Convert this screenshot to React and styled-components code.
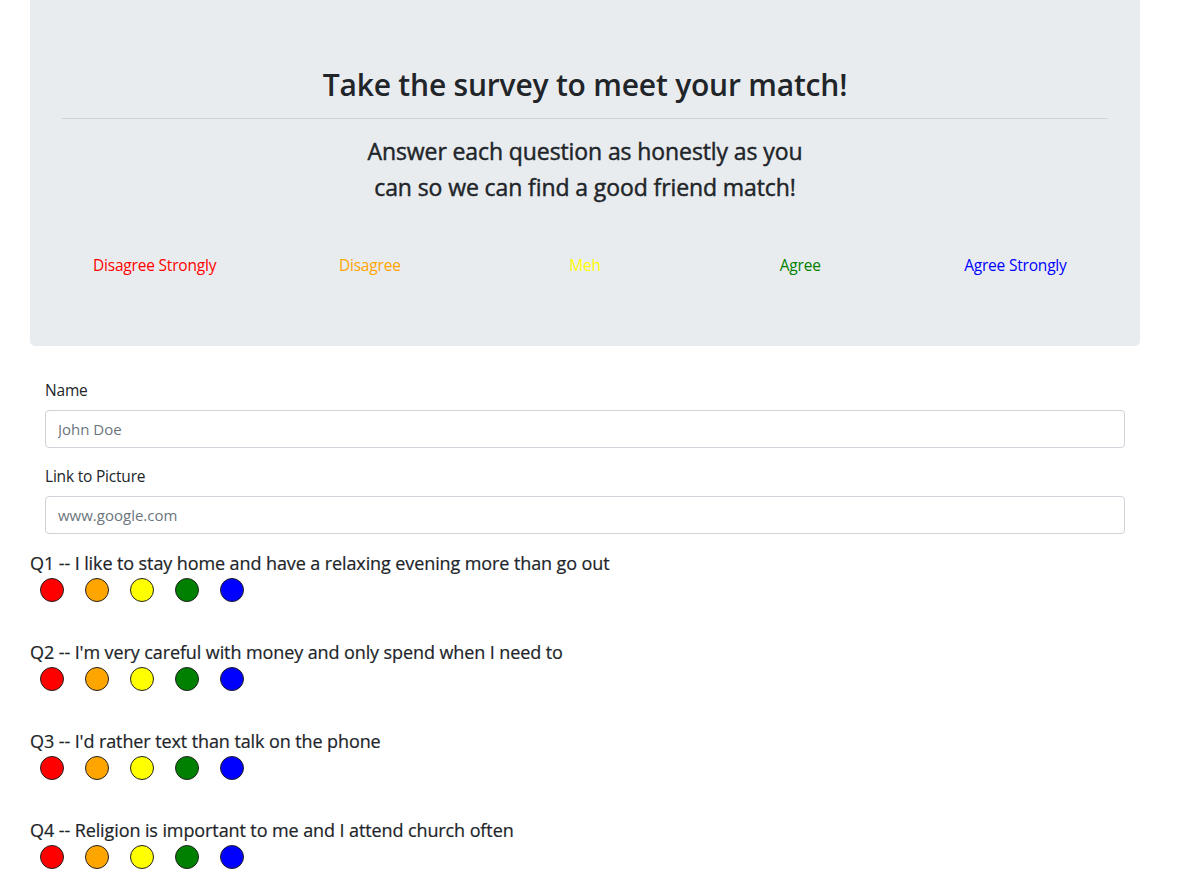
import React from "react";
import styled, { createGlobalStyle } from "styled-components";

const Global = createGlobalStyle`
  * { box-sizing: border-box; }
  body {
    margin: 0;
    background: #fff;
    color: #212529;
    font-family: "Open Sans", "Noto Sans", sans-serif;
    font-size: 16px;
    line-height: 1.5;
  }
`;

const Container = styled.div`
  width: 1110px;
  margin-left: 30px;
`;

const Jumbotron = styled.section`
  background: #e9ecef;
  border-radius: 0 0 5px 5px;
  padding: 66px 32px 69px;
  margin-bottom: 32px;
  text-align: center;
`;

const Title = styled.h1`
  margin: 0;
  font-size: 30px;
  font-weight: 600;
  line-height: 38px;
  letter-spacing: -0.2px;
`;

const Rule = styled.hr`
  border: 0;
  border-top: 1px solid rgba(0, 0, 0, 0.1);
  margin: 14px 0 14px;
`;

const Subtitle = styled.h4`
  margin: 0;
  font-size: 23px;
  font-weight: 400;
  line-height: 36px;
  letter-spacing: -0.1px;
  -webkit-text-stroke: 0.45px #212529;
`;

const Scale = styled.div`
  display: grid;
  grid-template-columns: repeat(5, 1fr);
  margin: 48px -15px 0;
`;

const ScaleLabel = styled.span`
  color: ${(p) => p.$color};
  font-size: 15.5px;
  line-height: 24px;
  letter-spacing: -0.2px;
`;

const Form = styled.form`
  padding: 0 15px 1px;
`;

const Group = styled.div`
  margin-bottom: 16px;
`;

const Label = styled.label`
  display: block;
  margin-bottom: 8px;
  font-size: 15.5px;
  line-height: 24px;
  letter-spacing: -0.2px;
`;

const Input = styled.input`
  display: block;
  width: 100%;
  height: 38px;
  padding: 6px 12px;
  font-family: inherit;
  font-size: 15px;
  color: #495057;
  background: #fff;
  border: 1px solid #ced4da;
  border-radius: 4px;
  outline: none;
  &::placeholder { color: #6c757d; }
`;

const Question = styled.div`
  margin: 0 0 38px;
`;

const QText = styled.div`
  font-size: 18px;
  line-height: 24px;
  letter-spacing: -0.1px;
  -webkit-text-stroke: 0.2px #212529;
`;

const Choices = styled.div`
  display: flex;
  gap: 21px;
  padding-left: 10px;
  margin-top: 3px;
`;

const Dot = styled.span`
  display: block;
  width: 24px;
  height: 24px;
  border-radius: 50%;
  border: 1px solid #222;
  background: ${(p) => p.$color};
`;

const scale = [
  { label: "Disagree Strongly", color: "#ff0000" },
  { label: "Disagree", color: "#ffa500" },
  { label: "Meh", color: "#ffff00" },
  { label: "Agree", color: "#008000" },
  { label: "Agree Strongly", color: "#0000ff" },
];

const questions = [
  "I like to stay home and have a relaxing evening more than go out",
  "I'm very careful with money and only spend when I need to",
  "I'd rather text than talk on the phone",
  "Religion is important to me and I attend church often",
];

export default function App() {
  return (
    <>
      <Global />
      <Container>
        <Jumbotron>
          <Title>Take the survey to meet your match!</Title>
          <Rule />
          <Subtitle>
            Answer each question as honestly as you
            <br />
            can so we can find a good friend match!
          </Subtitle>
          <Scale>
            {scale.map((s) => (
              <ScaleLabel key={s.label} $color={s.color}>
                {s.label}
              </ScaleLabel>
            ))}
          </Scale>
        </Jumbotron>
        <Form>
          <Group>
            <Label htmlFor="name">Name</Label>
            <Input id="name" placeholder="John Doe" />
          </Group>
          <Group>
            <Label htmlFor="pic">Link to Picture</Label>
            <Input id="pic" placeholder="www.google.com" />
          </Group>
        </Form>
        {questions.map((q, i) => (
          <Question key={i}>
            <QText>
              Q{i + 1} -- {q}
            </QText>
            <Choices>
              {scale.map((s) => (
                <Dot key={s.color} $color={s.color} />
              ))}
            </Choices>
          </Question>
        ))}
      </Container>
    </>
  );
}
